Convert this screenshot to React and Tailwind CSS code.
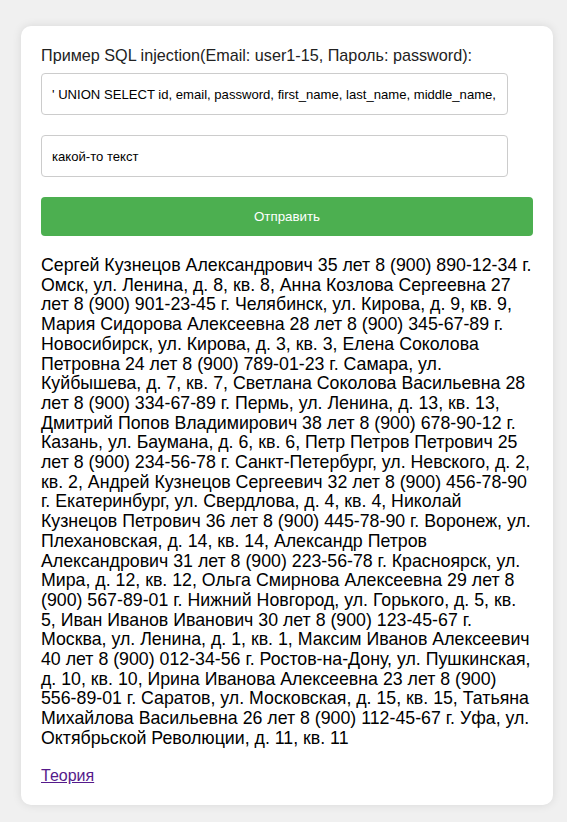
import React from 'react';

const results =
  'Сергей Кузнецов Александрович 35 лет 8 (900) 890-12-34 г. Омск, ул. Ленина, д. 8, кв. 8, Анна Козлова Сергеевна 27 лет 8 (900) 901-23-45 г. Челябинск, ул. Кирова, д. 9, кв. 9, Мария Сидорова Алексеевна 28 лет 8 (900) 345-67-89 г. Новосибирск, ул. Кирова, д. 3, кв. 3, Елена Соколова Петровна 24 лет 8 (900) 789-01-23 г. Самара, ул. Куйбышева, д. 7, кв. 7, Светлана Соколова Васильевна 28 лет 8 (900) 334-67-89 г. Пермь, ул. Ленина, д. 13, кв. 13, Дмитрий Попов Владимирович 38 лет 8 (900) 678-90-12 г. Казань, ул. Баумана, д. 6, кв. 6, Петр Петров Петрович 25 лет 8 (900) 234-56-78 г. Санкт-Петербург, ул. Невского, д. 2, кв. 2, Андрей Кузнецов Сергеевич 32 лет 8 (900) 456-78-90 г. Екатеринбург, ул. Свердлова, д. 4, кв. 4, Николай Кузнецов Петрович 36 лет 8 (900) 445-78-90 г. Воронеж, ул. Плехановская, д. 14, кв. 14, Александр Петров Александрович 31 лет 8 (900) 223-56-78 г. Красноярск, ул. Мира, д. 12, кв. 12, Ольга Смирнова Алексеевна 29 лет 8 (900) 567-89-01 г. Нижний Новгород, ул. Горького, д. 5, кв. 5, Иван Иванов Иванович 30 лет 8 (900) 123-45-67 г. Москва, ул. Ленина, д. 1, кв. 1, Максим Иванов Алексеевич 40 лет 8 (900) 012-34-56 г. Ростов-на-Дону, ул. Пушкинская, д. 10, кв. 10, Ирина Иванова Алексеевна 23 лет 8 (900) 556-89-01 г. Саратов, ул. Московская, д. 15, кв. 15, Татьяна Михайлова Васильевна 26 лет 8 (900) 112-45-67 г. Уфа, ул. Октябрьской Революции, д. 11, кв. 11';

export default function App() {
  return (
    <div className="min-h-[822px] bg-[#f0f0f0] pt-[26px] pb-[18px] [font-family:'Liberation_Sans',Arial,sans-serif] text-black">
      <div className="ml-[21px] w-[532px] rounded-[10px] bg-white px-5 pt-5 pb-[17px] shadow-[0_0_10px_rgba(0,0,0,0.1)]">
        <form className="flex flex-col" onSubmit={(e) => e.preventDefault()}>
          <label className="mb-[9px] text-[16.2px] leading-[18px] text-[#222]">
            Пример SQL injection(Email: user1-15, Пароль: password):
          </label>
          <input
            type="text"
            defaultValue="' UNION SELECT id, email, password, first_name, last_name, middle_name, age, phone, address FROM users --"
            className="h-[42px] w-[95%] rounded-[4px] border border-[#ccc] px-[10px] text-[13.1px] outline-none"
          />
          <input
            type="text"
            defaultValue="какой-то текст"
            className="mt-5 h-[42px] w-[95%] rounded-[4px] border border-[#ccc] px-[10px] text-[13.1px] outline-none"
          />
          <button
            type="submit"
            className="mt-5 h-[39px] w-full rounded-[4px] bg-[#4caf50] text-[13.33px] text-white"
          >
            Отправить
          </button>
        </form>
        <p className="mt-5 text-[17.75px] leading-[19.7px]">{results}</p>
        <a href="#" className="mt-[18px] inline-block text-[16px] leading-[18px] text-[#551a8b] underline">
          Теория
        </a>
      </div>
    </div>
  );
}
